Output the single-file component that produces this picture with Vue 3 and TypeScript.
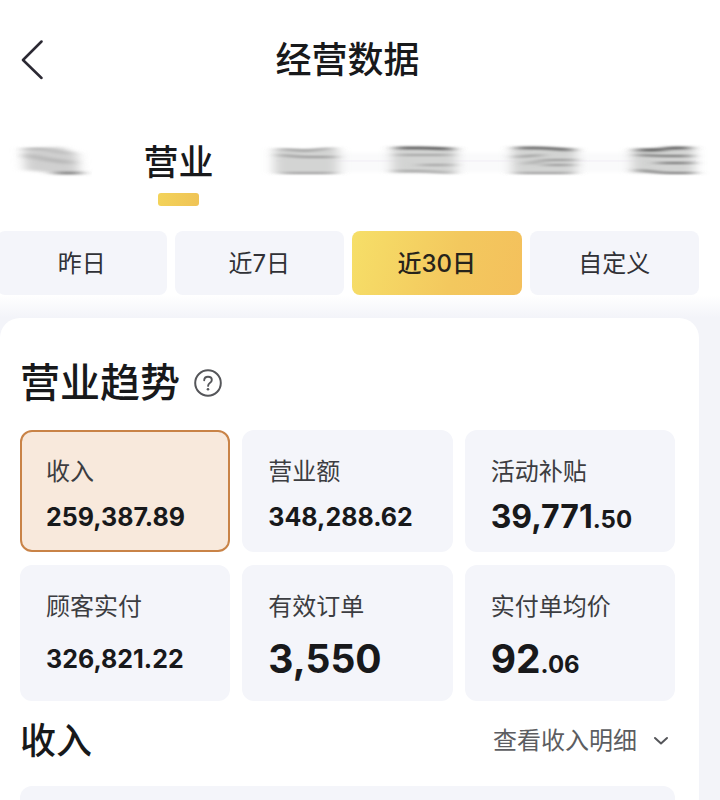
<script setup lang="ts">
import { ref } from 'vue'

interface Metric {
  label: string
  whole: string
  decimal: string
  size: 'small' | 'medium' | 'large'
}

const periods: string[] = ['昨日', '近7日', '近30日', '自定义']
const activePeriod = ref('近30日')

const metrics: Metric[] = [
  { label: '收入', whole: '259,387.89', decimal: '', size: 'small' },
  { label: '营业额', whole: '348,288.62', decimal: '', size: 'small' },
  { label: '活动补贴', whole: '39,771', decimal: '.50', size: 'medium' },
  { label: '顾客实付', whole: '326,821.22', decimal: '', size: 'small' },
  { label: '有效订单', whole: '3,550', decimal: '', size: 'large' },
  { label: '实付单均价', whole: '92', decimal: '.06', size: 'large' },
]
const activeMetric = ref('收入')
</script>

<template>
  <div class="page">
    <header class="header">
      <button class="back" type="button" aria-label="返回">
        <svg width="24" height="40" viewBox="0 0 24 40" fill="none">
          <path d="M21.5 1.5 3 20 21.5 38" stroke="#2b2933" stroke-width="2.5" stroke-linecap="round" stroke-linejoin="round" />
        </svg>
      </button>
      <h1>经营数据</h1>
    </header>

    <nav class="tabs">
      <svg class="smudge" width="96" height="48" viewBox="0 0 96 48" aria-hidden="true">
        <defs>
          <filter id="soft" x="-30%" y="-40%" width="160%" height="180%">
            <feGaussianBlur stdDeviation="6 1.4" />
          </filter>
          <filter id="streak" x="-20%" y="-40%" width="140%" height="180%">
            <feGaussianBlur stdDeviation="7 1" />
          </filter>
        </defs>
        <path d="M18 12 56 11 72 18 74 36 50 37 20 34Z" fill="#d0d0d0" filter="url(#soft)" />
        <g fill="none" filter="url(#streak)">
          <path d="M22 13 38 13 64 18" stroke="#b4b4b4" stroke-width="2" />
          <path d="M22 19 40 23 66 27" stroke="#b8b8b8" stroke-width="4" />
          <path d="M50 37H76" stroke="#808080" stroke-width="3" />
        </g>
      </svg>
      <button class="tab" type="button">营业</button>
      <svg class="smudge" width="456" height="48" viewBox="0 0 456 48" aria-hidden="true">
        <rect x="20" y="17" width="420" height="19" fill="#fafafb" filter="url(#soft)" />
        <path d="M20 25H440" stroke="#f1edf5" stroke-width="1" />
        <g fill="#d3d4d3">
          <rect x="18" y="13" width="64" height="24" filter="url(#soft)" />
          <rect x="136" y="13" width="64" height="24" filter="url(#soft)" />
          <rect x="256" y="13" width="64" height="24" filter="url(#soft)" />
          <rect x="376" y="13" width="62" height="24" filter="url(#soft)" />
        </g>
        <g fill="none" stroke="#999" stroke-width="2" filter="url(#streak)">
          <path d="M24 13 50 15 76 12M24 19 46 21 78 21M26 37H78" />
          <path d="M140 12H168L196 13" stroke="#5c5c5c" stroke-width="3" />
          <path d="M142 19H194M140 35 166 35 196 37M164 29H196" stroke="#a4a4a4" />
          <path d="M260 12H286L316 14" stroke="#686868" stroke-width="3" />
          <path d="M260 21 286 19M270 28 290 24 318 24M288 29H316M260 37H316" />
          <path d="M382 14 404 14 412 12H434" stroke="#5a5a5a" stroke-width="3" />
          <path d="M382 19 408 20H434M402 27H436M382 34 408 37H438" stroke="#757575" />
        </g>
      </svg>
    </nav>

    <div class="periods">
      <button
        v-for="period in periods"
        :key="period"
        type="button"
        class="period"
        :class="{ active: period === activePeriod }"
        @click="activePeriod = period"
      >{{ period }}</button>
    </div>

    <main class="body">
      <section class="card">
        <div class="heading">
          <h2>营业趋势</h2>
          <button class="help" type="button" aria-label="说明">
            <svg width="28" height="28" viewBox="0 0 28 28" fill="none" stroke="#55565a">
              <circle cx="14" cy="14" r="12.8" stroke-width="2" />
              <path d="M10.2 11.2C10.3 8.9 11.8 7.7 14 7.7c2.3 0 3.8 1.3 3.8 3.2 0 1.5-.8 2.3-2 3.1-1.2.8-1.7 1.4-1.7 2.9" stroke-width="1.9" stroke-linecap="round" />
              <circle cx="14" cy="20.2" r="1.3" fill="#55565a" stroke="none" />
            </svg>
          </button>
        </div>

        <div class="metrics">
          <button
            v-for="metric in metrics"
            :key="metric.label"
            type="button"
            class="metric"
            :class="{ active: metric.label === activeMetric }"
            @click="activeMetric = metric.label"
          >
            <span class="label">{{ metric.label }}</span>
            <span class="value" :class="metric.size">{{ metric.whole }}<span v-if="metric.decimal" class="decimal">{{ metric.decimal }}</span></span>
          </button>
        </div>

        <div class="income">
          <h3>收入</h3>
          <button class="detail" type="button">
            查看收入明细
            <svg width="16" height="10" viewBox="0 0 16 10" fill="none">
              <path d="M2 2 8 7.5 14 2" stroke="#55565a" stroke-width="2" stroke-linecap="round" stroke-linejoin="round" />
            </svg>
          </button>
        </div>
        <div class="panel"></div>
      </section>
    </main>
  </div>
</template>

<style>
body {
  background: #f3f4f9;
  overflow: hidden;
}
</style>

<style scoped>
.page {
  height: 100vh;
  overflow: hidden;
  display: flex;
  flex-direction: column;
  background: #fff;
  color: #18191b;
  font-family: Inter, "Noto Sans CJK SC", sans-serif;
}

button {
  margin: 0;
  padding: 0;
  border: 0;
  background: none;
  color: inherit;
  font: inherit;
  cursor: pointer;
}

svg {
  display: block;
  flex: none;
}

h1,
h2,
h3 {
  margin: 0;
  font-weight: 500;
}

.header {
  display: grid;
  grid-template-columns: 24px 1fr 24px;
  align-items: center;
  height: 120px;
  padding: 0 45px 0 20px;
  flex: none;
}

h1 {
  font-size: 36px;
  line-height: 48px;
  text-align: center;
}

.tabs {
  display: flex;
  align-items: flex-start;
  justify-content: space-between;
  height: 95px;
  margin-bottom: 16px;
  padding: 16px 8px 0 5px;
  box-sizing: border-box;
  flex: none;
}

.tab {
  display: flex;
  flex-direction: column;
  align-items: center;
  gap: 5px;
  font-size: 35px;
  font-weight: 500;
  line-height: 52px;
}

.tab::after {
  content: "";
  width: 41px;
  height: 13px;
  border-radius: 3px;
  background: linear-gradient(100deg, #f3d35a, #efc356);
}

.periods {
  display: grid;
  grid-template-columns: repeat(4, 1fr);
  gap: 8px;
  margin: 0 21px 0 -3px;
  flex: none;
}

.period {
  height: 64px;
  padding-bottom: 4px;
  border-radius: 8px;
  background: #f4f5fa;
  font-size: 24px;
  color: #303136;
}

.period.active {
  background: linear-gradient(105deg, #f6df68, #f3c85e 60%, #f4c05c);
  color: #26231b;
  font-weight: 500;
}

.body {
  flex: 1;
  padding: 23px 21px 0 0;
  background: linear-gradient(#fff, #f3f4f9 23px);
}

.card {
  padding: 39px 24px 0 20px;
  border-radius: 20px 20px 0 0;
  background: #fff;
}

.heading {
  display: flex;
  align-items: center;
  gap: 14px;
  height: 52px;
  margin-bottom: 21px;
}

h2 {
  font-size: 40px;
  line-height: 52px;
}

.metrics {
  display: grid;
  grid-template-columns: repeat(3, 1fr);
  grid-template-rows: 122px 136px;
  gap: 13px 12px;
}

.metric {
  display: flex;
  flex-direction: column;
  align-items: flex-start;
  padding: 22px 24px 6px;
  border: 2px solid #f4f5fa;
  border-radius: 12px;
  background: #f4f5fa;
  text-align: left;
}

.metric.active {
  border-color: #c98347;
  background: #f8e9dc;
}

.label {
  font-size: 24px;
  line-height: 36px;
  color: #3c3d41;
}

.value {
  margin: auto 0;
  font-weight: 700;
  line-height: 52px;
}

.small {
  font-size: 25px;
}

.medium {
  font-size: 32px;
}

.large {
  font-size: 39px;
}

.decimal {
  font-size: 24px;
  line-height: 24px;
}

.income {
  display: flex;
  align-items: center;
  justify-content: space-between;
  height: 80px;
  margin-bottom: 5px;
  padding-right: 6px;
}

h3 {
  font-size: 36px;
  line-height: 48px;
}

.detail {
  display: flex;
  align-items: center;
  gap: 16px;
  font-size: 24px;
  line-height: 36px;
  color: #5c5d61;
}

.panel {
  height: 120px;
  border-radius: 12px;
  background: #f4f5fa;
}
</style>
